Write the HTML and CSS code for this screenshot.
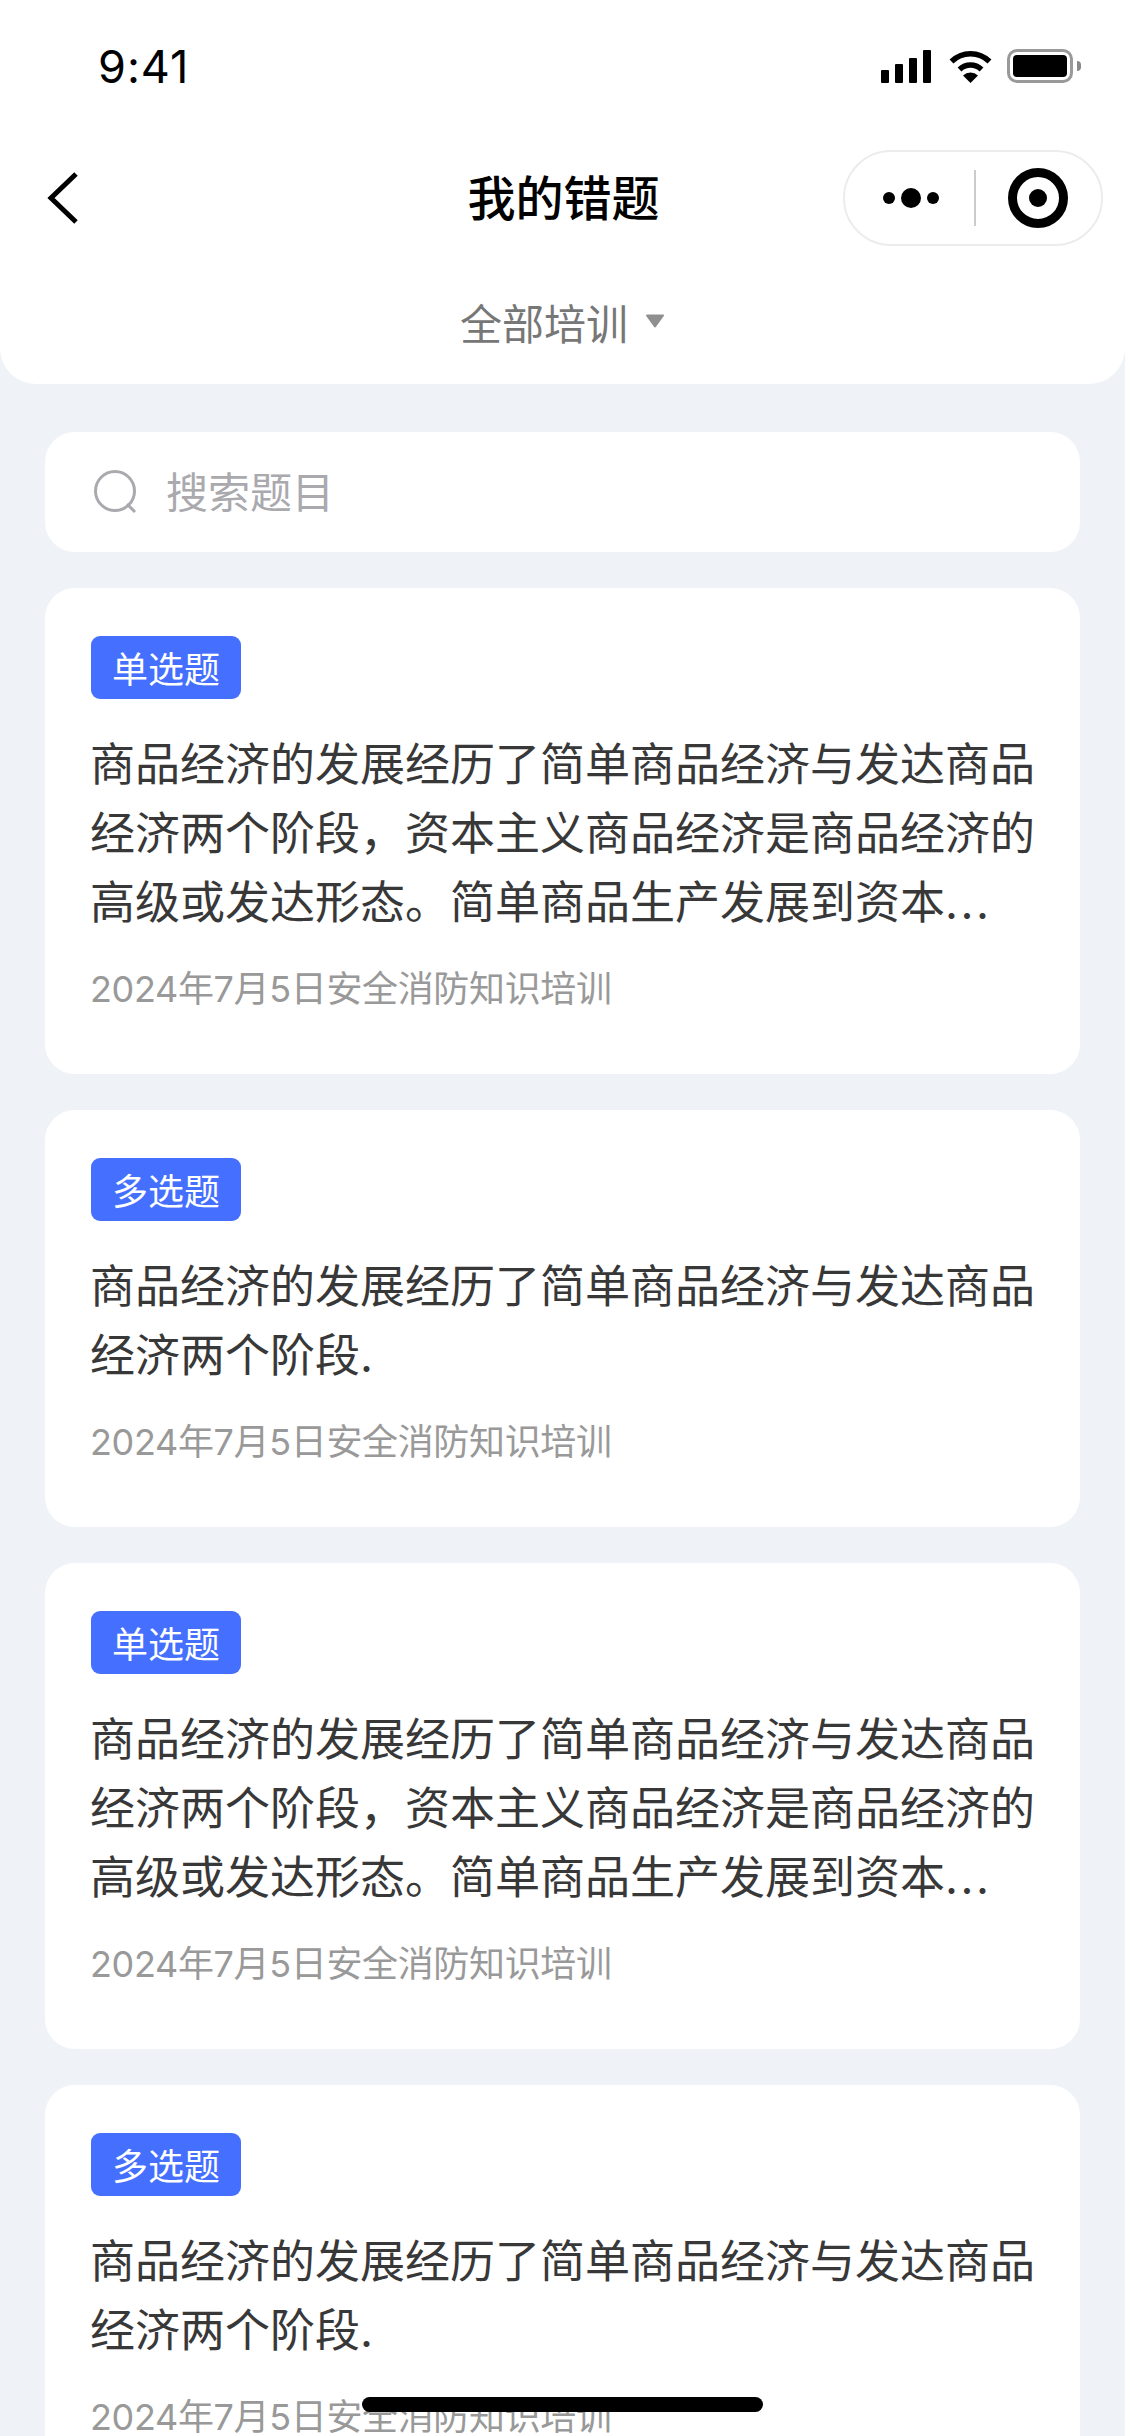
FILE: index.html
```html
<!DOCTYPE html>
<html lang="zh-CN">
<head>
    <meta charset="UTF-8">
    <meta name="viewport" content="width=device-width, initial-scale=1.0">
    <title>我的错题</title>
    <link rel="stylesheet" href="styles.css">
</head>
<body>
    <header class="header">
        <!-- Status bar -->
        <div class="status-bar">
            <span class="time">9:41</span>
            <div class="status-icons">
                <div class="signal">
                    <span class="bar bar-1"></span>
                    <span class="bar bar-2"></span>
                    <span class="bar bar-3"></span>
                    <span class="bar bar-4"></span>
                </div>
                <svg class="wifi" width="43" height="33" viewBox="0 0 43 33">
                    <path d="M2.5 11.5A27 27 0 0 1 40.5 11.5" fill="none" stroke="#000" stroke-width="5.5"/>
                    <path d="M10.5 19.5A16 16 0 0 1 32.5 19.5" fill="none" stroke="#000" stroke-width="5.5"/>
                    <path d="M21.5 33L14 25.5A11 11 0 0 1 29 25.5Z" fill="#000"/>
                </svg>
                <div class="battery"><span class="battery-level"></span></div>
                <span class="battery-cap"></span>
            </div>
        </div>

        <!-- Title row -->
        <div class="nav">
            <svg class="back" width="32" height="52" viewBox="0 0 32 52">
                <path d="M29 2L4 26L29 50" fill="none" stroke="#000" stroke-width="5"/>
            </svg>
            <h1 class="title">我的错题</h1>
            <div class="capsule">
                <svg class="capsule-more" width="66" height="20" viewBox="0 0 66 20">
                    <circle cx="6" cy="10" r="6"/>
                    <circle cx="28" cy="10" r="10"/>
                    <circle cx="50" cy="10" r="6"/>
                </svg>
                <span class="capsule-line"></span>
                <svg class="capsule-close" width="60" height="60" viewBox="0 0 60 60">
                    <circle cx="30" cy="30" r="25.5" fill="none" stroke="#000" stroke-width="9"/>
                    <circle cx="30" cy="30" r="9"/>
                </svg>
            </div>
        </div>

        <div class="filter">
            <span>全部培训</span>
            <svg width="20" height="14" viewBox="0 0 20 14">
                <path d="M2 1.5H18L10 12.5Z" fill="#8f8f8f" stroke="#8f8f8f" stroke-width="2" stroke-linejoin="round"/>
            </svg>
        </div>
    </header>

    <main class="content">
        <div class="search">
            <svg width="44" height="44" viewBox="0 0 44 44">
                <circle cx="21" cy="21" r="19.5" fill="none" stroke="#a9a9ae" stroke-width="3"/>
                <path d="M33 34L41 42" fill="none" stroke="#a9a9ae" stroke-width="3"/>
            </svg>
            <span class="search-text">搜索题目</span>
        </div>

        <div class="card">
            <span class="tag">单选题</span>
            <p class="question">商品经济的发展经历了简单商品经济与发达商品经济两个阶段，资本主义商品经济是商品经济的高级或发达形态。简单商品生产发展到资本<span class="dots">...</span></p>
            <p class="source">2024年7月5日安全消防知识培训</p>
        </div>

        <div class="card">
            <span class="tag">多选题</span>
            <p class="question">商品经济的发展经历了简单商品经济与发达商品经济两个阶段.</p>
            <p class="source">2024年7月5日安全消防知识培训</p>
        </div>

        <div class="card">
            <span class="tag">单选题</span>
            <p class="question">商品经济的发展经历了简单商品经济与发达商品经济两个阶段，资本主义商品经济是商品经济的高级或发达形态。简单商品生产发展到资本<span class="dots">...</span></p>
            <p class="source">2024年7月5日安全消防知识培训</p>
        </div>

        <div class="card">
            <span class="tag">多选题</span>
            <p class="question">商品经济的发展经历了简单商品经济与发达商品经济两个阶段.</p>
            <p class="source">2024年7月5日安全消防知识培训</p>
        </div>
    </main>

    <div class="home-indicator"></div>
</body>
</html>
```

FILE: styles.css
```css
body {
    font-family: 'Inter', 'Noto Sans CJK SC', sans-serif;
    background-color: #eff3f8;
    margin: 0;
    height: 2436px;
    overflow: hidden;
    position: relative;
}

.header {
    background-color: #fff;
    height: 384px;
    border-radius: 0 0 36px 36px;
}

.status-bar {
    height: 150px;
    display: flex;
    justify-content: space-between;
    align-items: flex-start;
    padding: 0 44px 0 98px;
    box-sizing: border-box;
}

.time {
    font-size: 45px;
    line-height: 54px;
    margin-top: 40px;
    letter-spacing: 1px;
    color: #000;
}

.status-icons {
    display: flex;
    align-items: center;
    margin-top: 49px;
}

.signal {
    display: flex;
    align-items: flex-end;
    gap: 6px;
    height: 33px;
    width: 51px;
}

.bar {
    width: 8px;
    background-color: #000;
    border-radius: 1px;
}

.bar-1 { height: 13px; }
.bar-2 { height: 19px; }
.bar-3 { height: 25px; }
.bar-4 { height: 33px; }

.wifi {
    margin-left: 17px;
}

.battery {
    width: 66px;
    height: 34px;
    margin-left: 15px;
    padding: 3px;
    box-sizing: border-box;
    border: 3px solid #999;
    border-radius: 10px;
}

.battery-level {
    display: block;
    height: 100%;
    background-color: #000;
    border-radius: 4px;
}

.battery-cap {
    width: 4px;
    height: 10px;
    margin-left: 4px;
    background-color: #888;
    border-radius: 0 5px 5px 0;
}

.nav {
    height: 96px;
    display: flex;
    align-items: center;
    position: relative;
    padding: 0 22px 0 47px;
    justify-content: space-between;
}

.title {
    font-size: 48px;
    font-weight: 500;
    color: #000;
    margin: 0 0 6px 2px;
    position: absolute;
    left: 0;
    right: 0;
    text-align: center;
}

.capsule {
    width: 260px;
    height: 96px;
    box-sizing: border-box;
    border: 2px solid #ececec;
    border-radius: 48px;
    display: flex;
    align-items: center;
    padding-left: 38px;
    position: relative;
}

.capsule-line {
    width: 2px;
    height: 56px;
    background-color: #ccc;
    margin-left: 25px;
}

.capsule-close {
    margin-left: 32px;
}

.filter {
    height: 60px;
    margin-top: 45px;
    display: flex;
    justify-content: center;
    align-items: center;
    gap: 17px;
    font-size: 42px;
    color: #777;
}

.content {
    padding: 48px 45px 0;
    display: flex;
    flex-direction: column;
    gap: 36px;
}

.search {
    height: 120px;
    background-color: #fff;
    border-radius: 30px;
    display: flex;
    align-items: center;
    gap: 28px;
    padding-left: 49px;
    font-size: 42px;
    color: #a9a9ae;
    flex-shrink: 0;
}

.search-text {
    margin-bottom: 6px;
}

.card {
    background-color: #fff;
    border-radius: 30px;
    padding: 48px 44px 60px 46px;
    flex-shrink: 0;
}

.tag {
    display: block;
    width: 150px;
    height: 63px;
    line-height: 69px;
    text-align: center;
    background-color: #4570ff;
    color: #fff;
    font-size: 36px;
    border-radius: 9px;
}

.question {
    font-size: 45px;
    line-height: 69px;
    color: #383838;
    margin: 31px 0 0 -1px;
}

.dots {
    letter-spacing: 2.5px;
}

.source {
    font-size: 36px;
    line-height: 50px;
    letter-spacing: -0.35px;
    color: #999;
    margin: 27px 0 0 -1px;
}

.home-indicator {
    position: absolute;
    left: 362px;
    top: 2397px;
    width: 401px;
    height: 15px;
    background-color: #000;
    border-radius: 8px;
}
```
